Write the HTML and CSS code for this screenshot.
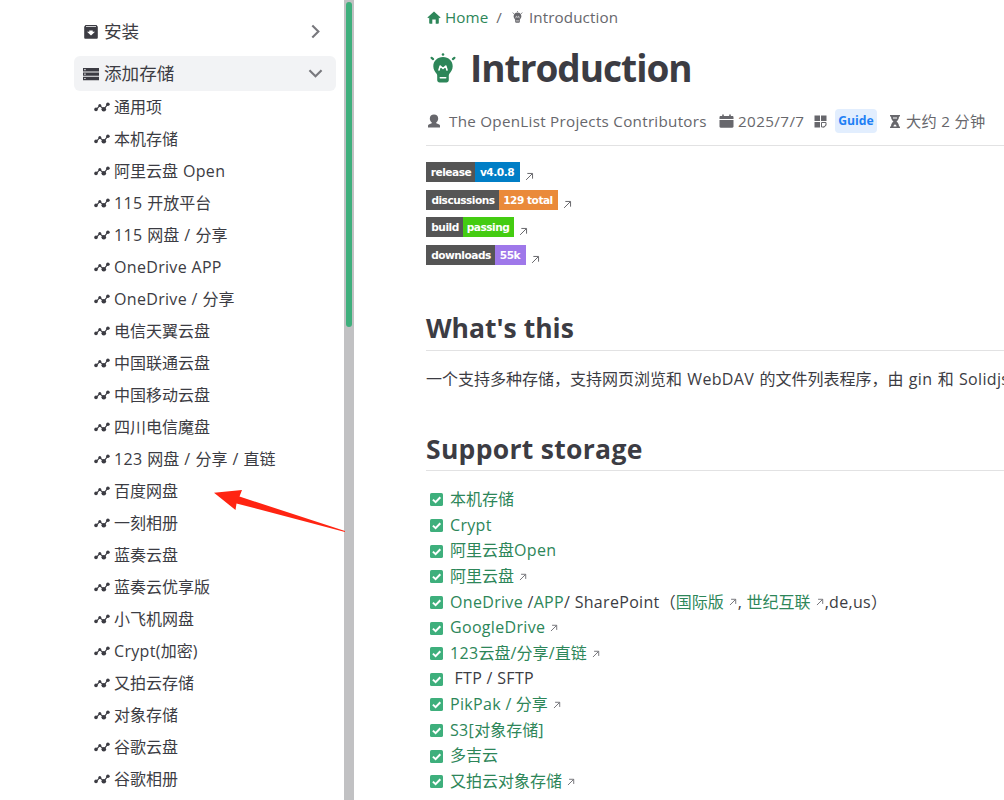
FILE: index.html
```html
<!DOCTYPE html>
<html lang="zh-CN">
<head>
    <meta charset="UTF-8">
    <meta name="viewport" content="width=device-width, initial-scale=1.0">
    <title>Introduction | OpenList</title>
    <link rel="stylesheet" href="styles.css">
</head>
<body>

    <!-- Icons -->
    <svg class="sprite" xmlns="http://www.w3.org/2000/svg">
        <symbol id="i-trend" viewBox="0 0 16 10">
            <path d="M2.200 7.600 5.800 3.600l4 3.800L13.800 2.200" fill="none" stroke="currentColor" stroke-width="1.100"/>
            <circle cx="2" cy="7.400" r="1.800"/><circle cx="5.800" cy="3.600" r="1.500"/><circle cx="9.800" cy="7.200" r="2.300"/><circle cx="13.900" cy="2.300" r="1.800"/>
        </symbol>
        <symbol id="i-ext" viewBox="0 0 10 10">
            <path d="M1.200 8.800 8 2M2.600 1.600h5.800v5.800" fill="none" stroke="currentColor" stroke-width="1.1"/>
        </symbol>
        <symbol id="i-check" viewBox="0 0 13 13">
            <rect width="13" height="13" rx="1.6" fill="#3eaf7c"/>
            <path d="m2.900 6.600 2.700 2.600L10.300 4.300" fill="none" stroke="#fff" stroke-width="2"/>
        </symbol>
        <symbol id="i-bulb" viewBox="0 0 26 30">
            <path d="M13 4C7.400 4 3.300 8 3.300 13.200c0 3.700 2 5.800 3.500 7.800.5.700.4 2 .4 3.200V27c0 1.500 1 2.400 2.400 2.400h6.800c1.400 0 2.400-.9 2.400-2.400v-2.800c0-1.200-.1-2.500.4-3.200 1.500-2 3.500-4.100 3.500-7.800C22.700 8 18.600 4 13 4z"/>
            <path class="bulb-line" d="m9 17 1.200-4 2.800 2.500 2.800-2.500L17 17M10.300 24.700h5.400"/>
            <circle cx="13" cy="1.500" r="1.300"/>
            <path d="m1.600 4.800 1.500 1.300M24.400 4.800l-1.500 1.300" stroke="currentColor" stroke-width="2.200" stroke-linecap="round"/>
        </symbol>
    </svg>

    <div class="layout">
        <aside class="sidebar">
            <div class="group">
                <svg class="group-icon" viewBox="0 0 16 16"><path fill-rule="evenodd" d="M2.500 1h11l1.300 1.800V13.500c0 .8-.5 1.300-1.300 1.300h-11c-.8 0-1.300-.5-1.300-1.300V2.800zM3 2v.8h10V2zM6.300 6.500v1.300H4l4 3.700 4-3.700H9.700V6.500z"/></svg>
                <span class="group-title">安装</span>
                <svg class="chevron" viewBox="0 0 16 16"><path d="m5 2.300 5.700 5.700L5 13.700"/></svg>
            </div>
            <div class="group active">
                <svg class="group-icon" viewBox="0 0 16 16"><path fill-rule="evenodd" d="M0 2h16v3.400H0zM0 6.400h16v3.400H0zM0 10.800h16v3.400H0zM1.300 3.100v1.200h1.300V3.100zM1.300 7.500v1.200h1.300V7.500zM1.300 11.900v1.200h1.300v-1.200z"/></svg>
                <span class="group-title">添加存储</span>
                <svg class="chevron" viewBox="0 0 16 16"><path d="M2.300 5 8 10.700 13.700 5"/></svg>
            </div>
            <ul class="sub">
                <li><svg><use href="#i-trend"/></svg>通用项</li>
                <li><svg><use href="#i-trend"/></svg>本机存储</li>
                <li><svg><use href="#i-trend"/></svg>阿里云盘 <span class="en">Open</span></li>
                <li><svg><use href="#i-trend"/></svg><span class="en">115</span> 开放平台</li>
                <li><svg><use href="#i-trend"/></svg><span class="en">115</span> 网盘 <span class="en">/</span> 分享</li>
                <li><svg><use href="#i-trend"/></svg><span class="en">OneDrive APP</span></li>
                <li><svg><use href="#i-trend"/></svg><span class="en">OneDrive /</span> 分享</li>
                <li><svg><use href="#i-trend"/></svg>电信天翼云盘</li>
                <li><svg><use href="#i-trend"/></svg>中国联通云盘</li>
                <li><svg><use href="#i-trend"/></svg>中国移动云盘</li>
                <li><svg><use href="#i-trend"/></svg>四川电信魔盘</li>
                <li><svg><use href="#i-trend"/></svg><span class="en">123</span> 网盘 <span class="en">/</span> 分享 <span class="en">/</span> 直链</li>
                <li><svg><use href="#i-trend"/></svg>百度网盘</li>
                <li><svg><use href="#i-trend"/></svg>一刻相册</li>
                <li><svg><use href="#i-trend"/></svg>蓝奏云盘</li>
                <li><svg><use href="#i-trend"/></svg>蓝奏云优享版</li>
                <li><svg><use href="#i-trend"/></svg>小飞机网盘</li>
                <li><svg><use href="#i-trend"/></svg><span class="en">Crypt(</span>加密<span class="en">)</span></li>
                <li><svg><use href="#i-trend"/></svg>又拍云存储</li>
                <li><svg><use href="#i-trend"/></svg>对象存储</li>
                <li><svg><use href="#i-trend"/></svg>谷歌云盘</li>
                <li><svg><use href="#i-trend"/></svg>谷歌相册</li>
            </ul>
        </aside>

        <div class="scrollbar"><div class="thumb"></div></div>

        <main class="content">
            <nav class="breadcrumb">
                <svg class="home-icon" viewBox="0 0 14 13"><path d="M7 .5 13.600 6.500 12.700 7.300l-.9-.7V12c0 .5-.3.800-.8.800H8.700V8.600H5.300v4.200H3c-.5 0-.8-.3-.8-.8V6.600l-.9.7L.4 6.500z"/></svg>
                <a>Home</a>
                <span class="sep">/</span>
                <svg class="bulb-icon"><use href="#i-bulb"/></svg>
                <span>Introduction</span>
            </nav>

            <h1><svg><use href="#i-bulb"/></svg><span>Introduction</span></h1>

            <div class="page-info">
                <svg class="author-icon" viewBox="0 0 12 14"><path d="M6 .5c2.500 0 4.200 1.600 4.200 3.900 0 1.600-.8 3.100-1.900 3.900v1l2.900 1.300c.5.300.8.700.8 1.200v1.700H0v-1.700c0-.5.300-.9.800-1.200l2.900-1.300v-1C2.600 7.500 1.800 6 1.800 4.400 1.800 2.100 3.500.5 6 .5z"/></svg>
                <span class="author">The OpenList Projects Contributors</span>
                <svg class="date-icon" viewBox="0 0 15 14"><path d="M.5 5V3.200c0-.7.500-1.200 1.200-1.200h1.500V.5h1.600V2h5.400V.5h1.600V2h1.500c.7 0 1.200.5 1.200 1.200V5zM.5 6h14v6.500c0 .7-.5 1.200-1.200 1.200H1.700c-.7 0-1.200-.5-1.200-1.200z"/></svg>
                <span class="date">2025/7/7</span>
                <svg class="cat-icon" viewBox="0 0 13 13"><path d="M.5.500h5.500v5.500H.5zM7 .5h5.500v5.500H7zM.5 7h5.500v5.500H.5z"/><path d="M7.500 12V7.500H12V9c0 2-1 3-3 3zM9.500 12.300l2.700-2.600" fill="none" stroke="currentColor"/></svg>
                <span class="tag">Guide</span>
                <svg class="time-icon" viewBox="0 0 10 13"><path fill-rule="evenodd" d="M0 0h10v1.500H9C9 4 7.800 5.500 6.500 6.500 7.800 7.500 9 9 9 11.500h1V13H0v-1.500h1C1 9 2.200 7.500 3.500 6.500 2.200 5.500 1 4 1 1.500H0zM3 2.600h4v.9H3zM5 9.300 3.500 10.800v.7h3v-.7z"/></svg>
                <span class="time">大约 2 分钟</span>
            </div>

            <div class="badges">
                <div class="badge-row"><span class="badge b-release"><b>release</b><i>v4.0.8</i></span><svg><use href="#i-ext"/></svg></div>
                <div class="badge-row"><span class="badge b-discussions"><b>discussions</b><i>129 total</i></span><svg><use href="#i-ext"/></svg></div>
                <div class="badge-row"><span class="badge b-build"><b>build</b><i>passing</i></span><svg><use href="#i-ext"/></svg></div>
                <div class="badge-row"><span class="badge b-downloads"><b>downloads</b><i>55k</i></span><svg><use href="#i-ext"/></svg></div>
            </div>

            <h2>What's this</h2>
            <p class="intro">一个支持多种存储，支持网页浏览和 <span class="en">WebDAV</span> 的文件列表程序，由 <span class="en">gin</span> 和 <span class="en">Solidjs</span></p>

            <h2 class="support">Support storage</h2>
            <ul class="tasks">
                <li><svg class="check"><use href="#i-check"/></svg><a>本机存储</a></li>
                <li><svg class="check"><use href="#i-check"/></svg><a class="en">Crypt</a></li>
                <li><svg class="check"><use href="#i-check"/></svg><a>阿里云盘<span class="en">Open</span></a></li>
                <li><svg class="check"><use href="#i-check"/></svg><a>阿里云盘</a><svg class="ext"><use href="#i-ext"/></svg></li>
                <li><svg class="check"><use href="#i-check"/></svg><span class="en"><a>OneDrive</a> /<a>APP</a>/ SharePoint</span>（<a>国际版</a><svg class="ext"><use href="#i-ext"/></svg><span class="en">, </span><a>世纪互联</a><svg class="ext"><use href="#i-ext"/></svg><span class="en">,de,us</span>）</li>
                <li><svg class="check"><use href="#i-check"/></svg><a class="en">GoogleDrive</a><svg class="ext"><use href="#i-ext"/></svg></li>
                <li><svg class="check"><use href="#i-check"/></svg><a><span class="en">123</span>云盘<span class="en">/</span>分享<span class="en">/</span>直链</a><svg class="ext"><use href="#i-ext"/></svg></li>
                <li><svg class="check"><use href="#i-check"/></svg><span class="en">&nbsp;FTP / SFTP</span></li>
                <li><svg class="check"><use href="#i-check"/></svg><a><span class="en">PikPak /</span> 分享</a><svg class="ext"><use href="#i-ext"/></svg></li>
                <li><svg class="check"><use href="#i-check"/></svg><a><span class="en">S3[</span>对象存储<span class="en">]</span></a></li>
                <li><svg class="check"><use href="#i-check"/></svg><a>多吉云</a></li>
                <li><svg class="check"><use href="#i-check"/></svg><a>又拍云对象存储</a><svg class="ext"><use href="#i-ext"/></svg></li>
            </ul>
        </main>
    </div>

    <!-- Arrow pointing at the sidebar entry -->
    <svg class="pointer" viewBox="0 0 132 44"><path d="M0 3.700 28 1l-2.500 6.500L131 42v.9L22.500 14.500 21.500 21z"/></svg>

</body>
</html>
```
FILE: styles.css
```css
:root {
    --text: #3c3c43;
    --muted: #67676c;
    --link: #2d8659;
    --accent: #3eaf7c;
    --line: #e2e2e3;
}
* { box-sizing: border-box; margin: 0; padding: 0; }
body {
    font-family: "Open Sans", "Noto Sans CJK SC", sans-serif;
    font-size: 16px;
    color: var(--text);
    background: #fff;
    width: 1004px;
    height: 800px;
    overflow: hidden;
    position: relative;
}
ul { list-style: none; }
svg { fill: currentColor; flex: none; }
a { color: var(--link); }
.sprite { display: none; }
.en { letter-spacing: 0.32px; word-spacing: 0; }
.layout { display: flex; height: 800px; }

/* Sidebar */
.sidebar {
    width: 344px;
    flex: none;
    padding: 14px 8px 0 74px;
    overflow: hidden;
}
.group {
    display: flex;
    align-items: center;
    height: 35px;
    margin-bottom: 7px;
    padding: 0 12px 0 9px;
    border-radius: 6px;
    font-size: 17.6px;
}
.group.active { background: #f2f3f5; margin-bottom: 0; }
.group-icon { width: 16px; height: 16px; margin-right: 5px; }
.group-title { flex: 1; line-height: 35px; }
.chevron {
    width: 17px;
    height: 17px;
    fill: none;
    stroke: #78787d;
    stroke-width: 2;
}
.sub li {
    display: flex;
    align-items: center;
    height: 32px;
    padding-left: 20px;
    white-space: pre;
    line-height: 32px;
    word-spacing: 0.8px;
}
.sub svg { width: 16px; height: 10px; margin-right: 4px; }

.scrollbar { width: 10px; flex: none; padding: 2px; background: #c1c1c3; }
.thumb { width: 6px; height: 325px; border-radius: 3px; background: var(--accent); }

/* Page */
.content {
    width: 650px;
    padding-left: 72px;
    white-space: nowrap;
    overflow: hidden;
}
.breadcrumb {
    display: flex;
    align-items: center;
    height: 34px;
    color: var(--muted);
    font-size: 15.2px;
    letter-spacing: 0.1px;
}
.home-icon { width: 14px; height: 13px; margin: 0 4px 0 1px; color: var(--link); }
.sep { margin: 0 10px 0 8px; }
.bulb-icon { width: 11px; height: 12px; margin-right: 6px; }
.bulb-line { fill: none; stroke: #fff; stroke-width: 1.6; stroke-linejoin: round; stroke-linecap: round; }
h1 {
    display: flex;
    align-items: center;
    height: 66px;
    font-size: 37px;
    font-weight: 700;
    letter-spacing: -1px;
}
h1 svg { width: 26px; height: 30px; margin: 2px 14px 0 4px; color: var(--link); }
.page-info {
    display: flex;
    align-items: center;
    height: 46px;
    padding-bottom: 3px;
    border-bottom: 1px solid var(--line);
    color: var(--muted);
    font-size: 15.2px;
}
.author-icon { width: 12px; height: 14px; margin: 0 9px 0 2px; }
.author { width: 270px; letter-spacing: 0.28px; }
.date-icon { width: 15px; height: 14px; margin-right: 4px; }
.date { width: 76px; letter-spacing: 0.4px; }
.cat-icon { width: 13px; height: 13px; margin-right: 8px; }
.tag {
    width: 42px;
    height: 24px;
    margin-right: 13px;
    border-radius: 4px;
    background: #e2eefe;
    color: #1e80f5;
    font-size: 12.2px;
    font-weight: 700;
    line-height: 23px;
    text-align: center;
}
.time-icon { width: 10px; height: 13px; margin-right: 6px; }
.time { letter-spacing: 0.3px; line-height: 20px; margin-top: -1px; }

.badges { padding-top: 16px; }
.badge-row { display: flex; height: 27.6px; }
.badge-row svg { width: 9px; height: 9px; margin: 10px 0 0 5px; color: var(--muted); }
.badge {
    display: flex;
    height: 20px;
    color: #fff;
    font: bold 10.6px/20px "DejaVu Sans", sans-serif;
    letter-spacing: -0.5px;
}
.badge b { background: #555; padding-left: 1px; text-align: center; }
.badge i { font-style: normal; padding-right: 1px; text-align: center; }
.b-release b { width: 49px; }
.b-release i { width: 45px; background: #007ec6; }
.b-discussions b { width: 73px; }
.b-discussions i { width: 59px; background: #ea8a3a; }
.b-build b { width: 37px; }
.b-build i { width: 51px; background: #4c1; }
.b-downloads b { width: 69px; }
.b-downloads i { width: 31px; background: #9f78ea; }

h2 {
    height: 45px;
    margin-top: 33.4px;
    border-bottom: 1px solid var(--line);
    font-size: 26.5px;
    font-weight: 700;
    line-height: 44px;
}
.intro { margin-top: 14px; line-height: 28px; word-spacing: 1.2px; }
h2.support { margin-top: 33px; line-height: 46px; letter-spacing: 0.3px; }
.tasks { padding-top: 16.3px; }
.tasks li {
    display: flex;
    align-items: center;
    height: 25.64px;
    padding-left: 4px;
    line-height: 25.64px;
    white-space: pre;
}
.check { width: 13px; height: 13px; margin-right: 7px; }
.ext { width: 8px; height: 8px; margin: 0 1px 0 5px; color: var(--muted); }

.pointer {
    position: absolute;
    left: 214px;
    top: 489px;
    width: 132px;
    height: 44px;
    color: #ff2412;
}
```
